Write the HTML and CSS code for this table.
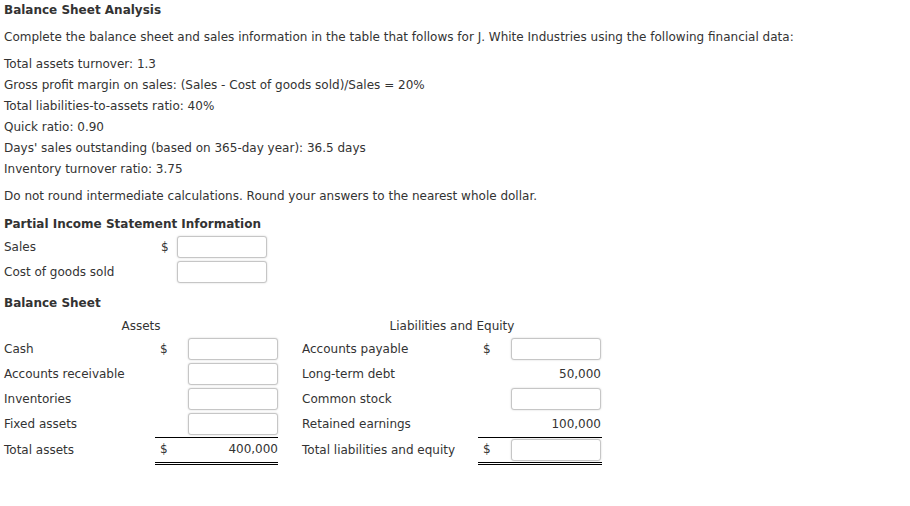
FILE: index.html
```html
<!DOCTYPE html>
<html>
<head>
<meta charset="utf-8">
<link rel="stylesheet" href="styles.css">
</head>
<body>
<div class="page">
  <h1 class="title">Balance Sheet Analysis</h1>
  <p class="intro">Complete the balance sheet and sales information in the table that follows for J. White Industries using the following financial data:</p>
  <div class="data">
    <div>Total assets turnover: 1.3</div>
    <div>Gross profit margin on sales: (Sales - Cost of goods sold)/Sales = 20%</div>
    <div>Total liabilities-to-assets ratio: 40%</div>
    <div>Quick ratio: 0.90</div>
    <div>Days' sales outstanding (based on 365-day year): 36.5 days</div>
    <div>Inventory turnover ratio: 3.75</div>
  </div>
  <p class="note">Do not round intermediate calculations. Round your answers to the nearest whole dollar.</p>

  <h2 class="section">Partial Income Statement Information</h2>
  <div class="income">
    <div class="label">Sales</div>
    <div class="cur">$</div>
    <div class="val"><span class="box"></span></div>
    <div class="label">Cost of goods sold</div>
    <div class="cur"></div>
    <div class="val"><span class="box"></span></div>
  </div>

  <h2 class="section bs-title">Balance Sheet</h2>
  <div class="sheet">
    <div class="head head-left">Assets</div>
    <div></div>
    <div class="head head-right">Liabilities and Equity</div>

    <div class="label">Cash</div>
    <div class="cur">$</div>
    <div class="val"><span class="box"></span></div>
    <div></div>
    <div class="label">Accounts payable</div>
    <div class="cur">$</div>
    <div class="val"><span class="box"></span></div>

    <div class="label">Accounts receivable</div>
    <div class="cur"></div>
    <div class="val"><span class="box"></span></div>
    <div></div>
    <div class="label">Long-term debt</div>
    <div class="cur"></div>
    <div class="val num">50,000</div>

    <div class="label">Inventories</div>
    <div class="cur"></div>
    <div class="val"><span class="box"></span></div>
    <div></div>
    <div class="label">Common stock</div>
    <div class="cur"></div>
    <div class="val"><span class="box"></span></div>

    <div class="label">Fixed assets</div>
    <div class="cur"></div>
    <div class="val"><span class="box"></span></div>
    <div></div>
    <div class="label">Retained earnings</div>
    <div class="cur"></div>
    <div class="val num">100,000</div>

    <div class="label total-label">Total assets</div>
    <div class="cur total">$</div>
    <div class="val num total">400,000</div>
    <div></div>
    <div class="label total-label">Total liabilities and equity</div>
    <div class="cur total">$</div>
    <div class="val total"><span class="box"></span></div>
  </div>
</div>
</body>
</html>
```

FILE: styles.css
```css
html, body {
  margin: 0;
  padding: 0;
  background: #ffffff;
}

body {
  font-family: "DejaVu Sans", Verdana, sans-serif;
  font-size: 12px;
  color: #333333;
}

.page {
  padding: 1px 4px 0;
}

.title {
  margin: 0;
  font-size: 12px;
  font-weight: bold;
  line-height: 18px;
}

.intro {
  margin: 9px 0 0;
  line-height: 18px;
}

.data {
  margin-top: 8px;
  line-height: 21px;
}

.note {
  margin: 7px 0 0;
  line-height: 18px;
}

.section {
  margin: 10px 0 0;
  font-size: 12px;
  font-weight: bold;
  line-height: 18px;
}

.income {
  display: grid;
  grid-template-columns: 151px 22px 90px;
  grid-auto-rows: 22px;
  row-gap: 3px;
  margin-top: 3px;
  align-items: center;
}

.income .cur {
  padding-left: 6px;
}

.bs-title {
  margin-top: 11px;
}

.sheet {
  display: grid;
  grid-template-columns: 151px 33px 90px 24px 176px 33px 91px;
  grid-template-rows: 19px repeat(4, 22px) 27px;
  row-gap: 3px;
  margin-top: 4px;
  align-items: center;
}

.head {
  text-align: center;
  line-height: 18px;
  padding-top: 1px;
  align-self: start;
}

.head-left {
  grid-column: 1 / 4;
}

.head-right {
  grid-column: 5 / 8;
}

.label {
  white-space: nowrap;
}

.cur {
  padding-left: 6px;
}

.sheet .cur {
  padding-left: 5px;
}

.val {
  height: 22px;
  display: flex;
  align-items: center;
}

.num {
  justify-content: flex-end;
  padding-right: 1px;
}

.box {
  display: block;
  box-sizing: border-box;
  width: 90px;
  height: 22px;
  border: 1px solid #c6c6c6;
  border-radius: 3px;
  background: #ffffff;
  box-shadow: 0 0 2px rgba(0, 0, 0, 0.18);
}

.sheet .total-label {
  align-self: start;
  margin-top: -1px;
  height: 28px;
  box-sizing: border-box;
  padding-bottom: 2px;
  display: flex;
  align-items: center;
}

.sheet .total {
  align-self: start;
  margin-top: -1px;
  height: 28px;
  box-sizing: border-box;
  border-top: 1px solid #000000;
  border-bottom: 3px double #000000;
  display: flex;
  align-items: center;
}

.sheet .cur.total,
.sheet .num.total {
  padding-bottom: 2px;
}

.sheet .val.total {
  padding-right: 0;
}
```
